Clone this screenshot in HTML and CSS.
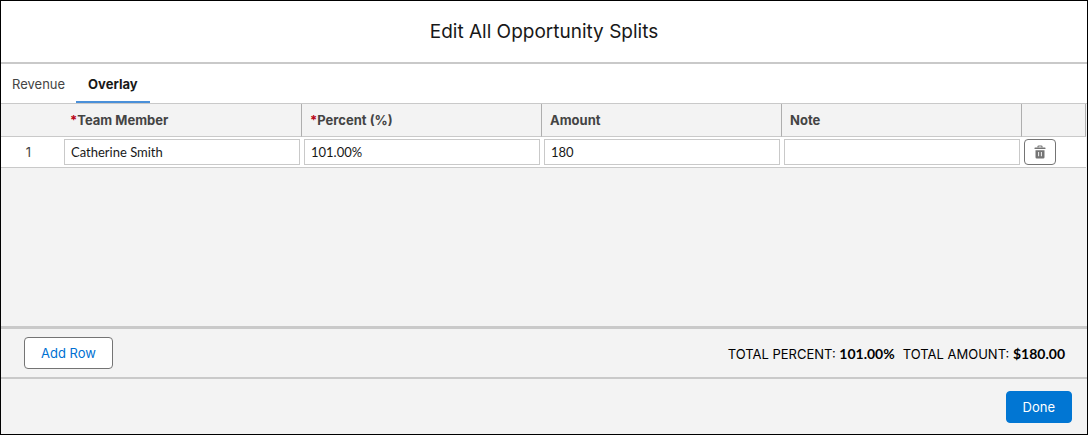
FILE: index.html
```html
<!DOCTYPE html>
<html lang="en">

<head>
    <meta charset="UTF-8">
    <meta name="viewport" content="width=device-width, initial-scale=1">
    <title>Edit All Opportunity Splits</title>
    <link rel="stylesheet" href="styles.css">
</head>

<body>
    <div class="modal">
        <header class="modal-header">
            <h1>Edit All Opportunity Splits</h1>
        </header>

        <nav class="tabs">
            <a class="tab" href="#revenue">Revenue</a>
            <a class="tab active" href="#overlay" aria-current="page">Overlay</a>
        </nav>

        <main class="splits">
            <table class="split-table">
                <thead>
                    <tr>
                        <th class="col-number"></th>
                        <th id="member"><span class="required">*</span>Team Member</th>
                        <th id="percent"><span class="required">*</span>Percent (%)</th>
                        <th id="amount">Amount</th>
                        <th id="note">Note</th>
                        <th class="col-action"></th>
                    </tr>
                </thead>
                <tbody>
                    <tr>
                        <td class="row-number">1</td>
                        <td><input type="text" value="Catherine Smith" aria-labelledby="member"></td>
                        <td><input type="text" value="101.00%" aria-labelledby="percent"></td>
                        <td><input type="text" value="180" aria-labelledby="amount"></td>
                        <td><input type="text" value="" aria-labelledby="note"></td>
                        <td>
                            <button type="button" class="btn-icon" aria-label="Delete row">
                                <svg viewBox="0 0 14 14" width="14" height="14" aria-hidden="true">
                                    <path fill="none" stroke="currentColor" stroke-width="1.2" d="M5 2.6V1.8q0-.8.8-.8h2.4q.8 0 .8.8v.8" />
                                    <rect x="1.5" y="2.4" width="11" height="1.7" rx=".6" fill="currentColor" />
                                    <path fill="currentColor" fill-rule="evenodd" d="M2.5 5.2h9v7q0 1.3-1.3 1.3H3.8q-1.3 0-1.3-1.3zM5.2 7v4.3h.9V7zM7.9 7v4.3h.9V7z" />
                                </svg>
                            </button>
                        </td>
                    </tr>
                </tbody>
            </table>
        </main>

        <div class="totals-bar">
            <button type="button" class="btn btn-neutral">Add Row</button>
            <div class="totals">
                <span>TOTAL PERCENT: <strong>101.00%</strong></span>
                <span>TOTAL AMOUNT: <strong>$180.00</strong></span>
            </div>
        </div>

        <footer class="modal-footer">
            <button type="button" class="btn btn-brand">Done</button>
        </footer>
    </div>
</body>

</html>
```

FILE: styles.css
```css
* {
    box-sizing: border-box;
}

body {
    margin: 0;
    font-family: Inter, "Liberation Sans", sans-serif;
    font-size: 13px;
    line-height: 20px;
    color: #181818;
}

.modal {
    display: flex;
    flex-direction: column;
    min-height: 100vh;
    border: 1px solid #000;
    background: #f3f3f3;
}

.modal-header {
    padding: 16px;
    border-bottom: 2px solid #c9c9c9;
    background: #fff;
    text-align: center;
}

h1 {
    margin: 0;
    font-size: 19px;
    font-weight: 400;
    line-height: 29px;
}

.tabs {
    display: flex;
    border-bottom: 1px solid #c9c9c9;
    background: #fff;
}

.tab {
    padding: 10px 11px 7px;
    border-bottom: 2px solid transparent;
    color: #444;
    text-decoration: none;
}

.tab.active {
    padding-left: 12px;
    padding-right: 12px;
    border-bottom-color: #4a90d9;
    color: #181818;
    font-weight: 700;
}

.splits {
    flex: 1;
    padding-right: 1px;
}

.split-table {
    width: 100%;
    table-layout: fixed;
    border-spacing: 0;
}

.split-table th {
    height: 33px;
    padding: 0 8px;
    border-right: 1px solid #aeaeae;
    border-bottom: 1px solid #c9c9c9;
    color: #444;
    font-weight: 700;
    text-align: left;
}

.split-table th.col-number {
    width: 61px;
    border-right: none;
}

.split-table th.col-action {
    width: 64px;
}

.required {
    color: #ba0517;
}

.split-table td {
    padding: 2px;
    border-bottom: 1px solid #c9c9c9;
    background: #fff;
}

.split-table td.row-number {
    padding-right: 8px;
    color: #444;
    text-align: center;
}

.split-table input {
    display: block;
    width: 100%;
    height: 26px;
    padding: 0 6px;
    border: 1px solid #c9c9c9;
    background: #fff;
    color: #181818;
    font-family: Lato, sans-serif;
    font-size: 13px;
}

.btn-icon {
    display: flex;
    align-items: center;
    justify-content: center;
    width: 32px;
    height: 26px;
    padding: 0;
    border: 1px solid #747474;
    border-radius: 4px;
    background: #fff;
    color: #747474;
}

.totals-bar {
    display: flex;
    align-items: center;
    justify-content: space-between;
    padding: 8px 22px 8px 23px;
    border-top: 3px solid #c9c9c9;
    border-bottom: 2px solid #c9c9c9;
}

.totals {
    display: flex;
    gap: 8px;
    padding-top: 2px;
    color: #000;
}

.totals strong {
    font-family: Lato, sans-serif;
    font-size: 14px;
    font-weight: 700;
}

.btn {
    height: 32px;
    padding: 0 16px;
    border: 1px solid #747474;
    border-radius: 4px;
    font-family: inherit;
    font-size: 13px;
}

.btn-neutral {
    background: #fff;
    color: #0070d2;
}

.btn-brand {
    border-color: #0176d3;
    background: #0176d3;
    color: #fff;
}

.modal-footer {
    display: flex;
    justify-content: flex-end;
    padding: 12px 15px 11px;
}
```
